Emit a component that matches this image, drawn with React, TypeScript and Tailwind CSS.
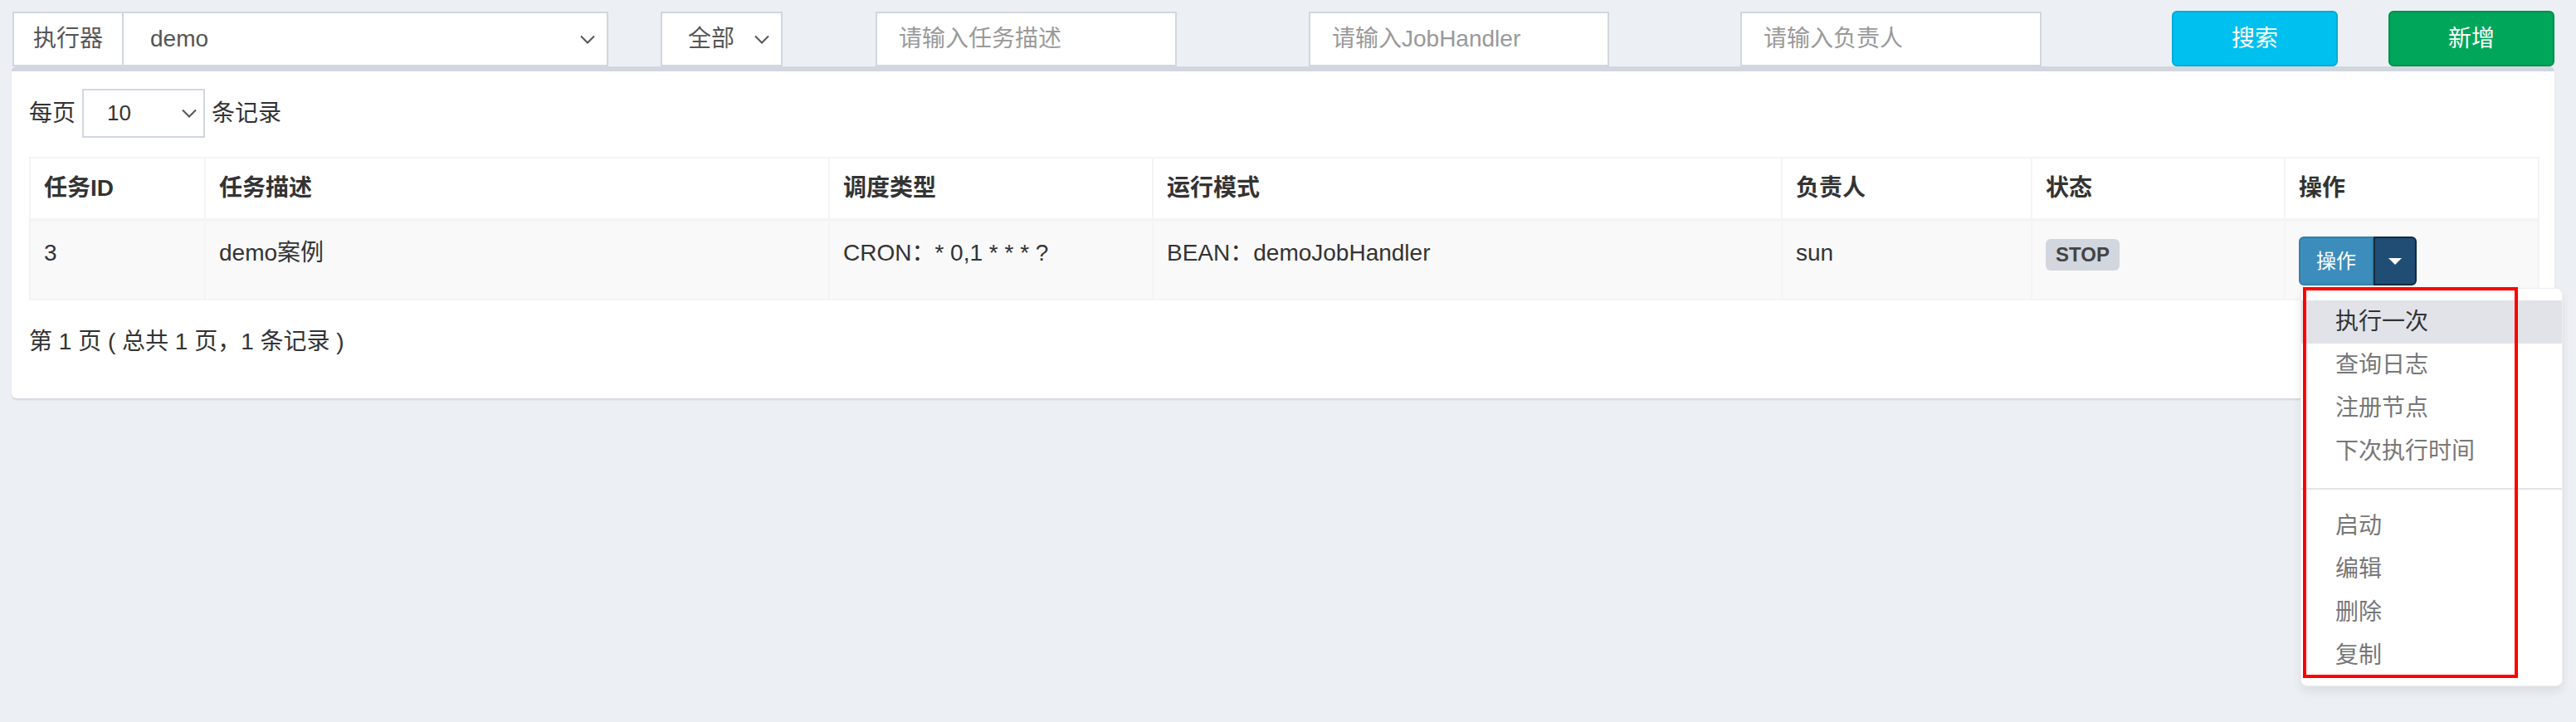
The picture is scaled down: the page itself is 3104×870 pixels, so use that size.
import React from 'react';

function Chevron() {
  return (
    <svg width="18" height="11" viewBox="0 0 18 11" fill="none">
      <path d="M1 1.5l8 8 8-8" stroke="#555" strokeWidth="2" />
    </svg>
  );
}

const cols = [211, 752, 390, 758, 301, 305, 306];
const heads = ['任务ID', '任务描述', '调度类型', '运行模式', '负责人', '状态', '操作'];

const menuTop = ['执行一次', '查询日志', '注册节点', '下次执行时间'];
const menuBottom = ['启动', '编辑', '删除', '复制'];

function OpsButton() {
  return (
    <div className="relative inline-flex h-[59px]">
      <span className="flex w-[90px] items-center justify-center rounded-l-[6px] border-2 border-[#367fa9] bg-[#3c8dbc] text-[24px] text-white">
        操作
      </span>
      <span className="flex w-[52px] items-center justify-center rounded-r-[6px] border-2 border-[#122b40] bg-[#204d74]">
        <span className="h-0 w-0 border-x-[8px] border-t-[8px] border-x-transparent border-t-white" />
      </span>

      <div className="absolute left-[2px] top-[62px] z-10 w-[316px] rounded-[8px] border border-[#eeeeee] bg-white pb-[10px] pt-[14px] shadow-[0_6px_12px_rgba(0,0,0,0.08)]">
        {menuTop.map((m, i) => (
          <div
            key={m}
            className={
              i === 0
                ? 'flex h-[52px] items-center bg-[#e1e3e9] pl-[41px] text-[28px] text-[#333]'
                : 'flex h-[52px] items-center pl-[41px] text-[28px] text-[#777]'
            }
          >
            {m}
          </div>
        ))}
        <div className="my-[18px] h-[2px] bg-[#e5e5e5]" />
        {menuBottom.map((m) => (
          <div key={m} className="flex h-[52px] items-center pl-[41px] text-[28px] text-[#777]">
            {m}
          </div>
        ))}
      </div>

      {/* red highlight frame */}
      <div className="pointer-events-none absolute left-[5px] top-[61px] z-20 h-[471px] w-[259px] border-4 border-[#ff0000]" />
    </div>
  );
}

export default function App() {
  return (
    <div className="min-h-screen w-[3104px] bg-[#ecf0f5] font-['Liberation_Sans','Noto_Sans_CJK_SC',sans-serif] text-[28px] text-[#333]">
      {/* search bar */}
      <div className="flex h-[80px] items-start pl-[15px] pt-[13px]">
        <div className="mt-px flex h-[66px] w-[718px]">
          <div className="flex w-[134px] items-center justify-center border-2 border-[#d2d6de] bg-white text-[#555]">执行器</div>
          <div className="flex flex-1 items-center justify-between border-2 border-l-0 border-[#d2d6de] bg-white pl-[32px] pr-[14px] text-[#555]">
            <span>demo</span>
            <Chevron />
          </div>
        </div>
        <div className="ml-[63px] mt-px flex h-[66px] w-[147px] items-center justify-between border-2 border-[#d2d6de] bg-white pl-[31px] pr-[14px] text-[#555]">
          <span>全部</span>
          <Chevron />
        </div>
        <div className="ml-[112px] mt-px flex h-[66px] w-[363px] items-center border-2 border-[#d2d6de] bg-white pl-[26px] text-[#999]">请输入任务描述</div>
        <div className="ml-[159px] mt-px flex h-[66px] w-[362px] items-center border-2 border-[#d2d6de] bg-white pl-[26px] text-[#999]">请输入JobHandler</div>
        <div className="ml-[158px] mt-px flex h-[66px] w-[363px] items-center border-2 border-[#d2d6de] bg-white pl-[26px] text-[#999]">请输入负责人</div>
        <button className="ml-[157px] flex h-[67px] w-[200px] items-center justify-center rounded-[6px] border-2 border-[#00acd6] bg-[#00c0ef] text-white">搜索</button>
        <button className="ml-[61px] flex h-[67px] w-[200px] items-center justify-center rounded-[6px] border-2 border-[#008d4c] bg-[#00a65a] text-white">新增</button>
      </div>

      {/* list box */}
      <div className="ml-[14px] w-[3064px] rounded-[6px] border-t-[6px] border-[#d2d6de] bg-white px-[21px] pb-[48px] pt-[21px] shadow-[0_2px_2px_rgba(0,0,0,0.1)]">
        <div className="flex items-center gap-[8px]">
          <span>每页</span>
          <div className="flex h-[59px] w-[148px] items-center justify-between border-2 border-[#d2d6de] pl-[28px] pr-[8px] text-[26px] text-[#333]">
            <span>10</span>
            <Chevron />
          </div>
          <span>条记录</span>
        </div>

        <table className="mt-[23px] w-full table-fixed border-collapse border-2 border-[#f4f4f4]">
          <colgroup>
            {cols.map((w, i) => (
              <col key={i} style={{ width: w }} />
            ))}
          </colgroup>
          <thead>
            <tr>
              {heads.map((h) => (
                <th key={h} className="border-2 border-b-4 border-[#f4f4f4] px-[16px] py-[16px] text-left font-bold leading-[40px] text-[#333]">
                  {h}
                </th>
              ))}
            </tr>
          </thead>
          <tbody>
            <tr className="bg-[#f9f9f9]">
              <td className="border-2 border-[#f4f4f4] px-[16px] pb-[16px] pt-[18px] align-top leading-[40px]">3</td>
              <td className="border-2 border-[#f4f4f4] px-[16px] pb-[16px] pt-[18px] align-top leading-[40px]">demo案例</td>
              <td className="border-2 border-[#f4f4f4] px-[16px] pb-[16px] pt-[18px] align-top leading-[40px]">CRON：* 0,1 * * * ?</td>
              <td className="border-2 border-[#f4f4f4] px-[16px] pb-[16px] pt-[18px] align-top leading-[40px]">BEAN：demoJobHandler</td>
              <td className="border-2 border-[#f4f4f4] px-[16px] pb-[16px] pt-[18px] align-top leading-[40px]">sun</td>
              <td className="border-2 border-[#f4f4f4] px-[16px] pb-[16px] pt-[18px] align-top leading-[40px]">
                <span className="mt-[3px] inline-flex h-[38px] items-center rounded-[6px] bg-[#d2d6de] px-[12px] text-[24px] font-bold text-[#444]">STOP</span>
              </td>
              <td className="border-2 border-[#f4f4f4] px-[16px] pb-[16px] pt-[18px] align-top leading-[40px]">
                <OpsButton />
              </td>
            </tr>
          </tbody>
        </table>

        <div className="mt-[30px] leading-[40px] text-[#333]">第 1 页 ( 总共 1 页，1 条记录 )</div>
      </div>
    </div>
  );
}
